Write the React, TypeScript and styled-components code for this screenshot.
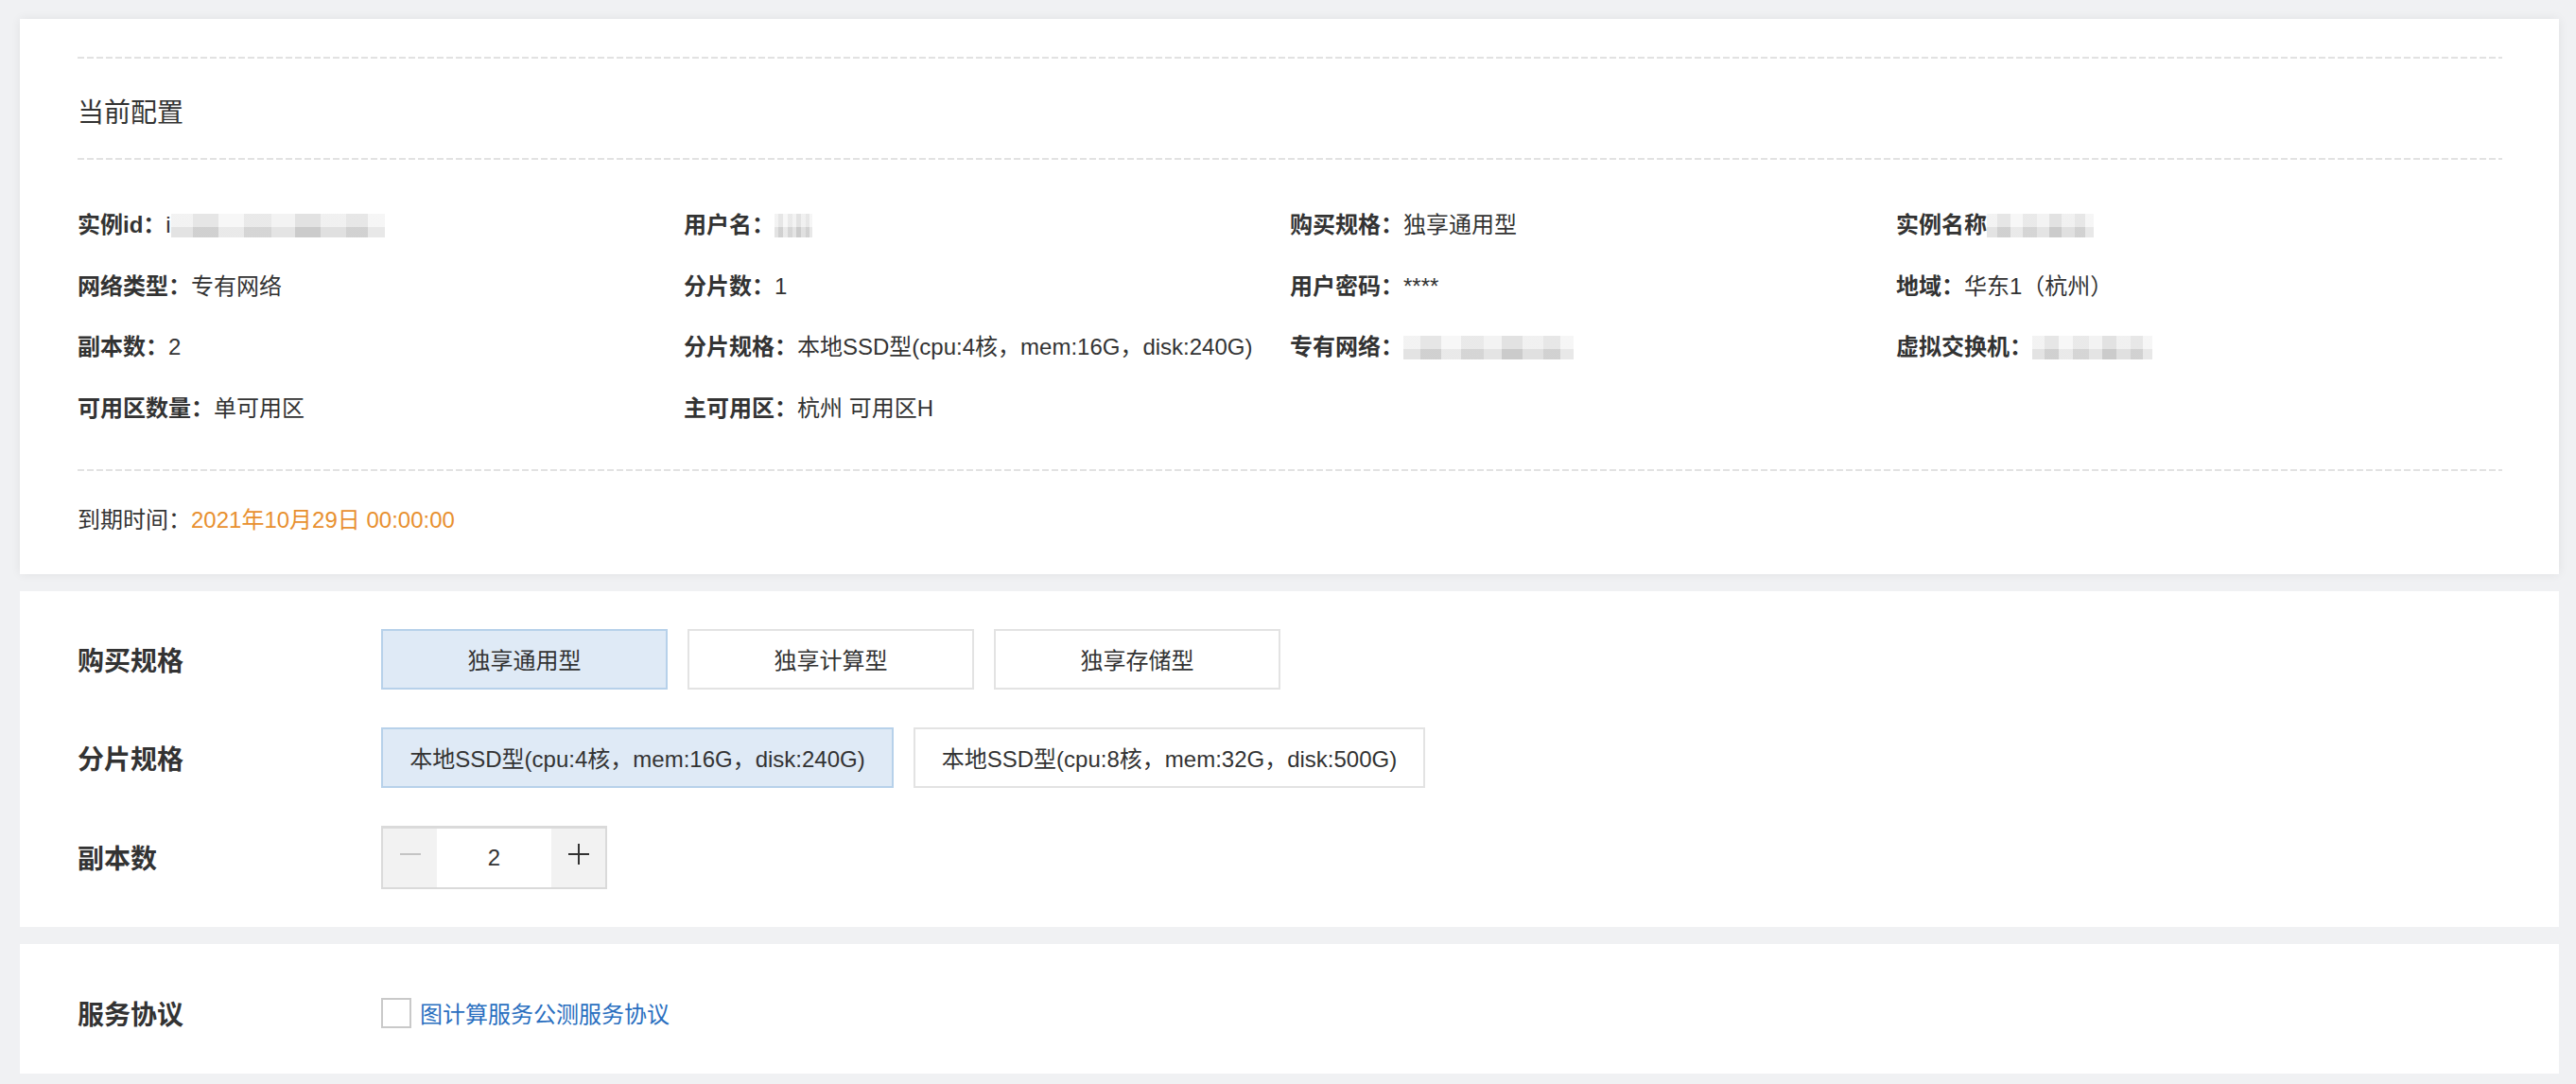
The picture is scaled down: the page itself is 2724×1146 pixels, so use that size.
import React from 'react'
import styled, { createGlobalStyle } from 'styled-components'

const GlobalStyle = createGlobalStyle`
  html, body {
    margin: 0;
    padding: 0;
    background: #f0f1f3;
  }
  body {
    font-family: "Liberation Sans", "Noto Sans CJK SC", sans-serif;
    color: #333;
  }
`

const Page = styled.div`
  width: 2724px;
  height: 1146px;
  box-sizing: border-box;
  padding: 20px 18px 0 21px;
  overflow: hidden;
`
const Card = styled.div<{ $shadow?: boolean }>`
  background: #fff;
  box-shadow: ${(p) => (p.$shadow ? '0 0 10px rgba(0, 0, 0, 0.07)' : 'none')};
  margin-bottom: 18px;
`
const InfoCard = styled(Card)`
  padding: 40px 60px 41px 61px;
`
const Divider = styled.div`
  height: 2px;
  background: repeating-linear-gradient(to right, #e2e2e2 0 7px, transparent 7px 10px);
`
const Title = styled.div`
  font-size: 28px;
  line-height: 40px;
  padding: 38px 0 27px;
  color: #333;
`
const InfoGrid = styled.div`
  display: grid;
  grid-template-columns: repeat(4, 1fr);
  row-gap: 32.5px;
  padding: 53px 0 48px;
`
const Item = styled.div`
  font-size: 24px;
  line-height: 32px;
  display: flex;
  align-items: center;
  white-space: nowrap;
`
const Key = styled.span`
  font-weight: 600;
`
const Mask = styled.span<{ $w: number }>`
  display: inline-block;
  width: ${(p) => p.$w}px;
  height: 25px;
  background:
    linear-gradient(180deg, rgba(255, 255, 255, 0.35) 0 55%, rgba(0, 0, 0, 0.04) 55%),
    linear-gradient(90deg, #ececec 0 10%, #d9d9d9 10% 22%, #f3f3f3 22% 34%, #dedede 34% 47%,
      #ededed 47% 58%, #d3d3d3 58% 70%, #e9e9e9 70% 82%, #dadada 82% 92%, #f1f1f1 92%);
`
const Expire = styled.div`
  font-size: 24px;
  line-height: 32px;
  padding-top: 36px;
`
const Orange = styled.span`
  color: #e8902f;
`

const FormCard = styled(Card)<{ $pad: string }>`
  padding: ${(p) => p.$pad};
  display: flex;
  flex-direction: column;
  gap: 40px;
`
const FormRow = styled.div`
  display: grid;
  grid-template-columns: 321px 1fr;
  align-items: center;
  min-height: 64px;
`
const FormLabel = styled.div`
  font-size: 28px;
  font-weight: 600;
  color: #333;
`
const Options = styled.div`
  display: flex;
  gap: 21px;
`
const Option = styled.div<{ $active?: boolean; $w: number }>`
  box-sizing: border-box;
  width: ${(p) => p.$w}px;
  height: 64px;
  display: flex;
  align-items: center;
  justify-content: center;
  font-size: 24px;
  color: #333;
  white-space: nowrap;
  background: ${(p) => (p.$active ? '#dfeaf6' : '#fff')};
  border: 2px solid ${(p) => (p.$active ? '#b7d1ea' : '#e3e3e3')};
`
const Stepper = styled.div`
  box-sizing: border-box;
  width: 239px;
  height: 67px;
  display: flex;
  border: 2px solid #dadada;
  border-top-width: 3px;
`
const StepBtn = styled.div`
  width: 57px;
  background: #f2f2f2;
  display: flex;
  align-items: center;
  justify-content: center;
  padding-bottom: 8px;
  box-sizing: border-box;
`
const StepValue = styled.div`
  flex: 1;
  display: flex;
  align-items: center;
  justify-content: center;
  font-size: 24px;
  color: #333;
`
const Agree = styled.label`
  display: flex;
  align-items: center;
  gap: 9px;
`
const Box = styled.span`
  box-sizing: border-box;
  width: 32px;
  height: 32px;
  border: 2px solid #c9c9c9;
  background: #fff;
`
const Link = styled.a`
  font-size: 24px;
  color: #2a6fc0;
  text-decoration: none;
`

const info: { k: string; v?: string; mask?: number; lead?: string }[] = [
  { k: '实例id：', lead: 'i', mask: 226 },
  { k: '用户名：', mask: 40 },
  { k: '购买规格：', v: '独享通用型' },
  { k: '实例名称', mask: 113 },
  { k: '网络类型：', v: '专有网络' },
  { k: '分片数：', v: '1' },
  { k: '用户密码：', v: '****' },
  { k: '地域：', v: '华东1（杭州）' },
  { k: '副本数：', v: '2' },
  { k: '分片规格：', v: '本地SSD型(cpu:4核，mem:16G，disk:240G)' },
  { k: '专有网络：', mask: 180 },
  { k: '虚拟交换机：', mask: 127 },
  { k: '可用区数量：', v: '单可用区' },
  { k: '主可用区：', v: '杭州 可用区H' },
]

const App = () => {
  return (
    <Page>
      <GlobalStyle />
      <InfoCard $shadow>
        <Divider />
        <Title>当前配置</Title>
        <Divider />
        <InfoGrid>
          {info.map((item) => (
            <Item key={item.k}>
              <Key>{item.k}</Key>
              {item.v}
              {item.lead}
              {item.mask ? <Mask $w={item.mask} /> : null}
            </Item>
          ))}
        </InfoGrid>
        <Divider />
        <Expire>
          到期时间：<Orange>2021年10月29日 00:00:00</Orange>
        </Expire>
      </InfoCard>

      <FormCard $pad="40px 60px 40px 61px">
        <FormRow>
          <FormLabel>购买规格</FormLabel>
          <Options>
            <Option $w={303} $active>独享通用型</Option>
            <Option $w={303}>独享计算型</Option>
            <Option $w={303}>独享存储型</Option>
          </Options>
        </FormRow>
        <FormRow>
          <FormLabel>分片规格</FormLabel>
          <Options>
            <Option $w={542} $active>本地SSD型(cpu:4核，mem:16G，disk:240G)</Option>
            <Option $w={541}>本地SSD型(cpu:8核，mem:32G，disk:500G)</Option>
          </Options>
        </FormRow>
        <FormRow>
          <FormLabel>副本数</FormLabel>
          <Stepper>
            <StepBtn>
              <svg width="24" height="24" viewBox="0 0 24 24">
                <path d="M1 12h22" stroke="#c4c4c4" strokeWidth="2" />
              </svg>
            </StepBtn>
            <StepValue>2</StepValue>
            <StepBtn>
              <svg width="24" height="24" viewBox="0 0 24 24">
                <path d="M1 12h22M12 1v22" stroke="#333" strokeWidth="2" />
              </svg>
            </StepBtn>
          </Stepper>
        </FormRow>
      </FormCard>

      <FormCard $pad="41px 60px 32px 61px">
        <FormRow>
          <FormLabel>服务协议</FormLabel>
          <Agree>
            <Box />
            <Link href="#">图计算服务公测服务协议</Link>
          </Agree>
        </FormRow>
      </FormCard>
    </Page>
  )
}

export default App
